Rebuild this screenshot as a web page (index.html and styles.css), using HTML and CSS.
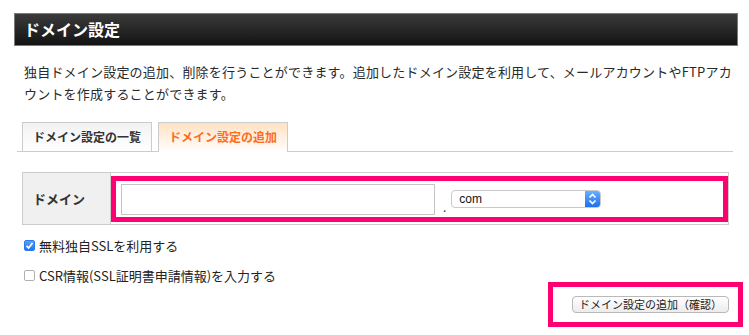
FILE: index.html
```html
<!DOCTYPE html>
<html lang="ja">
<head>
    <meta charset="UTF-8">
    <meta name="viewport" content="width=device-width, initial-scale=1.0">
    <title>ドメイン設定</title>
    <link rel="stylesheet" href="styles.css">
</head>
<body>
    <div class="page">
        <h1 class="title">ドメイン設定</h1>
        <p class="lead">独自ドメイン設定の追加、削除を行うことができます。追加したドメイン設定を利用して、メールアカウントやFTPアカウントを作成することができます。</p>

        <ul class="tabs">
            <li class="tab">ドメイン設定の一覧</li>
            <li class="tab is-active">ドメイン設定の追加</li>
        </ul>

        <table class="form-table">
            <tr>
                <th>ドメイン</th>
                <td>
                    <div class="mark domain-row">
                        <input type="text" class="domain-input">
                        <span class="dot">.</span>
                        <div class="select">
                            <span class="select-value">com</span>
                            <span class="select-arrow">
                                <svg width="9" height="12" viewBox="0 0 9 12">
                                    <path d="M1.5 4.5 L4.5 1.5 L7.5 4.5 M1.5 7.5 L4.5 10.5 L7.5 7.5" fill="none" stroke="#fff" stroke-width="1.6"/>
                                </svg>
                            </span>
                        </div>
                    </div>
                </td>
            </tr>
        </table>

        <div class="options">
            <label class="check">
                <span class="box is-checked">
                    <svg width="9" height="9" viewBox="0 0 9 9">
                        <path d="M1.5 4.8 L3.6 7 L7.5 2" fill="none" stroke="#fff" stroke-width="1.7"/>
                    </svg>
                </span>
                無料独自SSLを利用する
            </label>
            <label class="check">
                <span class="box"></span>
                CSR情報(SSL証明書申請情報)を入力する
            </label>
        </div>

        <div class="actions">
            <div class="mark submit-mark">
                <button type="submit" class="btn">ドメイン設定の追加（確認）</button>
            </div>
        </div>
    </div>
</body>
</html>
```

FILE: styles.css
```css
body {
    margin: 0;
    font-family: "Noto Sans CJK JP", "Noto Sans", sans-serif;
    color: #333;
    background: #fff;
}
.page {
    width: 724px;
    margin-left: 14px;
    padding-top: 13px;
}
.title {
    margin: 0;
    height: 31px;
    line-height: 31px;
    padding-left: 9px;
    font-size: 16px;
    font-weight: bold;
    color: #fff;
    border: 1px solid #7a7a7a;
    background: linear-gradient(#3b3b3b, #131313);
}
.lead {
    width: 712px;
    margin: 15px 0 0 0;
    padding-left: 10px;
    font-size: 13px;
    line-height: 22px;
    letter-spacing: 0.2px;
    color: #2a2a2a;
}
.tabs {
    list-style: none;
    display: flex;
    gap: 6px;
    width: 711px;
    margin: 17px 0 0 3px;
    padding: 0 0 0 5px;
    border-bottom: 1px solid #ccc;
}
.tab {
    width: 128px;
    height: 28px;
    line-height: 28px;
    margin-bottom: -1px;
    text-align: center;
    font-size: 12px;
    font-weight: bold;
    color: #333;
    border: 1px solid #ccc;
    border-bottom: none;
    background: linear-gradient(#f2f2f2, #fff);
    box-sizing: content-box;
}
.tab.is-active {
    height: 29px;
    color: #ff6b1c;
    background: linear-gradient(#ffe2c2, #fff);
}
.form-table {
    width: 707px;
    margin: 20px 0 0 8px;
    border-collapse: collapse;
    border: 1px solid #ccc;
}
.form-table th {
    width: 88px;
    padding: 0 0 0 10px;
    text-align: left;
    font-size: 13px;
    font-weight: bold;
    background: #f0f0f0;
    border-right: 1px solid #ccc;
    box-sizing: border-box;
}
.form-table td {
    padding: 3px 0 2px 0;
}
.mark {
    border: 5px solid #fe0072;
}
.domain-row {
    display: flex;
    align-items: center;
    height: 36px;
    padding: 0 5px;
}
.domain-input {
    width: 314px;
    height: 31px;
    margin: 0;
    padding: 0 6px;
    border: 1px solid #c4c4c4;
    box-sizing: border-box;
}
.dot {
    align-self: flex-end;
    margin: 0 5px 0 8px;
    font-size: 12px;
    line-height: 20px;
    color: #333;
}
.select {
    display: flex;
    width: 150px;
    height: 18px;
    border: 1px solid #c9c9c9;
    border-radius: 4px;
    background: #fff;
    box-sizing: border-box;
    overflow: hidden;
}
.select-value {
    flex: 1;
    padding-left: 7px;
    font-family: "Liberation Sans", sans-serif;
    font-size: 12px;
    line-height: 16px;
    color: #111;
}
.select-arrow {
    display: flex;
    align-items: center;
    justify-content: center;
    width: 15px;
    background: linear-gradient(#6ab0fb, #1b6ff3);
}
.options {
    padding: 10px 0 0 10px;
}
.check {
    display: flex;
    align-items: center;
    gap: 4px;
    height: 20px;
    margin-bottom: 10px;
    font-size: 13px;
    color: #222;
}
.box {
    display: flex;
    align-items: center;
    justify-content: center;
    width: 11px;
    height: 11px;
    border: 1px solid #b0b0b0;
    border-radius: 2px;
    background: #fff;
    box-sizing: border-box;
}
.box.is-checked {
    border-color: #2b7cf0;
    background: linear-gradient(#5aa3f9, #1f74f1);
}
.actions {
    display: flex;
    justify-content: flex-end;
    margin-right: -5px;
    margin-top: -13px;
}
.submit-mark {
    padding: 9px 9px 9px 19px;
}
.btn {
    display: block;
    width: 157px;
    height: 17px;
    padding: 0;
    font-family: "Noto Sans CJK JP", sans-serif;
    font-size: 11px;
    line-height: 15px;
    color: #222;
    border: 1px solid #b9b9b9;
    border-radius: 4px;
    background: linear-gradient(#fff, #ececec);
}
```
